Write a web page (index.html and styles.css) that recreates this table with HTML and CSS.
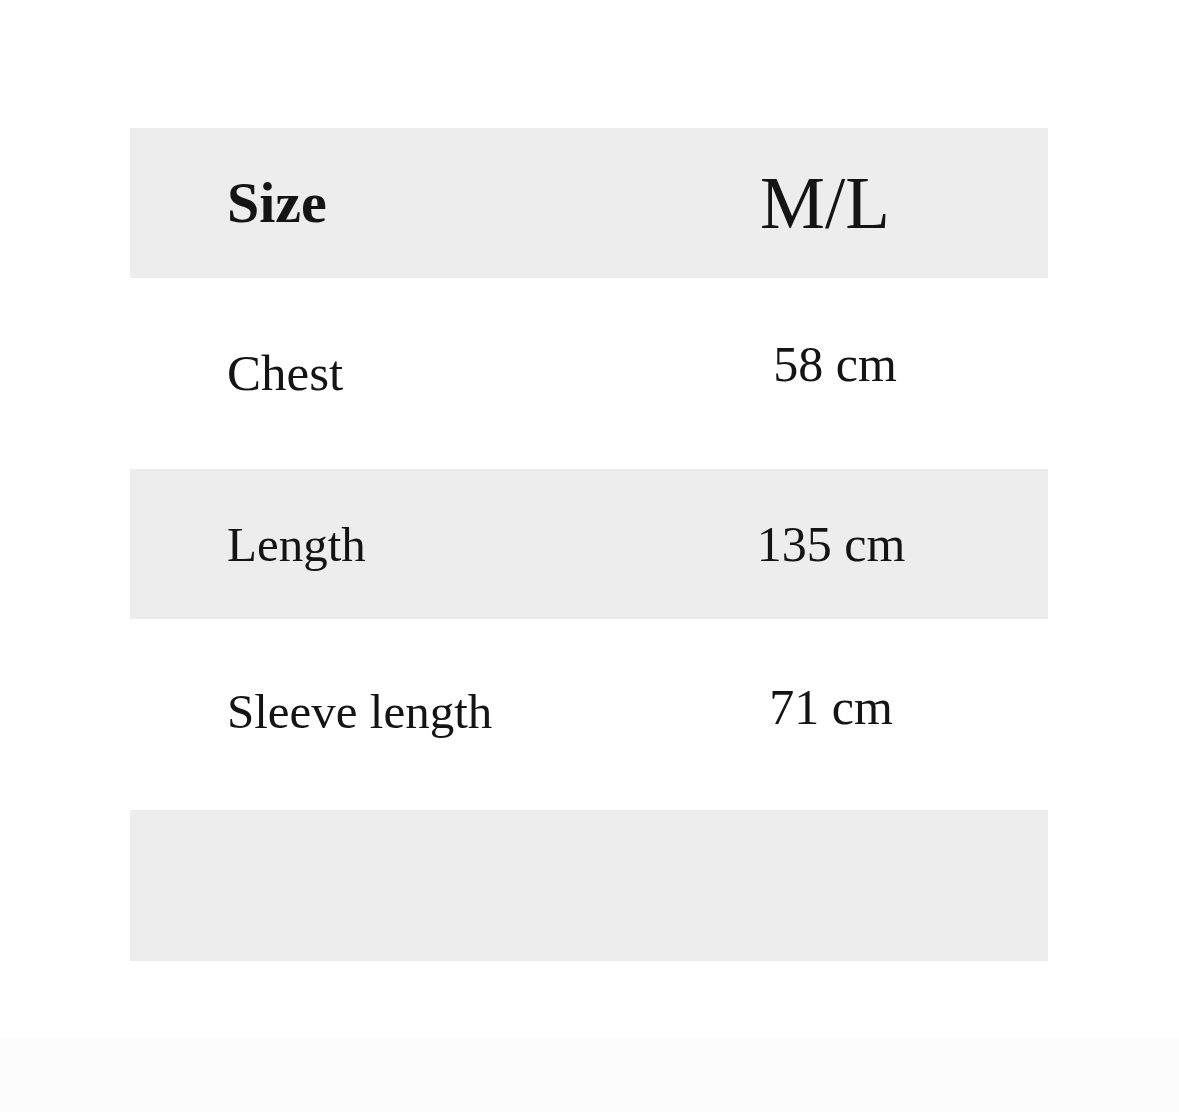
FILE: index.html
```html
<!DOCTYPE html>
<html lang="en">
<head>
<meta charset="utf-8">
<title>Size chart</title>
<link rel="stylesheet" href="styles.css">
</head>
<body>
<main class="page">
  <section class="chart">
    <div class="row row--gray row--head">
      <div class="cell cell--label cell--head">Size</div>
      <div class="cell cell--value cell--headval">M/L</div>
    </div>
    <div class="row row--white">
      <div class="cell cell--label">Chest</div>
      <div class="cell cell--value cell--lift">58 cm</div>
    </div>
    <div class="row row--gray">
      <div class="cell cell--label cell--mid">Length</div>
      <div class="cell cell--value">135 cm</div>
    </div>
    <div class="row row--white">
      <div class="cell cell--label cell--small">Sleeve length</div>
      <div class="cell cell--value cell--lift2">71 cm</div>
    </div>
    <div class="row row--gray row--empty"></div>
  </section>
  <div class="footer-band"></div>
</main>
</body>
</html>
```

FILE: styles.css
```css
html, body {
  margin: 0;
  padding: 0;
  background: #ffffff;
}

.page {
  width: 1179px;
  height: 1112px;
  display: flex;
  flex-direction: column;
  overflow: hidden;
}

.chart {
  margin: 128px 0 0 130px;
  width: 918px;
  display: flex;
  flex-direction: column;
}

.row {
  display: grid;
  grid-template-columns: 484px 434px;
  align-items: center;
}

.row--gray {
  background: #ededed;
  height: 150px;
}

.row--white {
  background: #ffffff;
  height: 191px;
}

.row--empty {
  height: 151px;
}

.cell {
  font-family: "Liberation Serif", "Times New Roman", serif;
  color: #141414;
  font-size: 50px;
  line-height: 1;
}

.cell--label {
  padding-left: 97px;
  font-size: 51px;
}

.cell--mid {
  font-size: 49px;
}

.cell--small {
  font-size: 49px;
  padding-bottom: 6px;
}

.cell--head {
  font-weight: bold;
  font-size: 58px;
}

.cell--value {
  text-align: center;
}

.cell--headval {
  font-size: 73px;
  padding-right: 12px;
}

.cell--lift {
  padding-bottom: 19px;
  padding-left: 8px;
}

.cell--lift2 {
  padding-bottom: 16px;
}

.footer-band {
  margin-top: 78px;
  flex: 1;
  background: #fcfcfc;
}
```
